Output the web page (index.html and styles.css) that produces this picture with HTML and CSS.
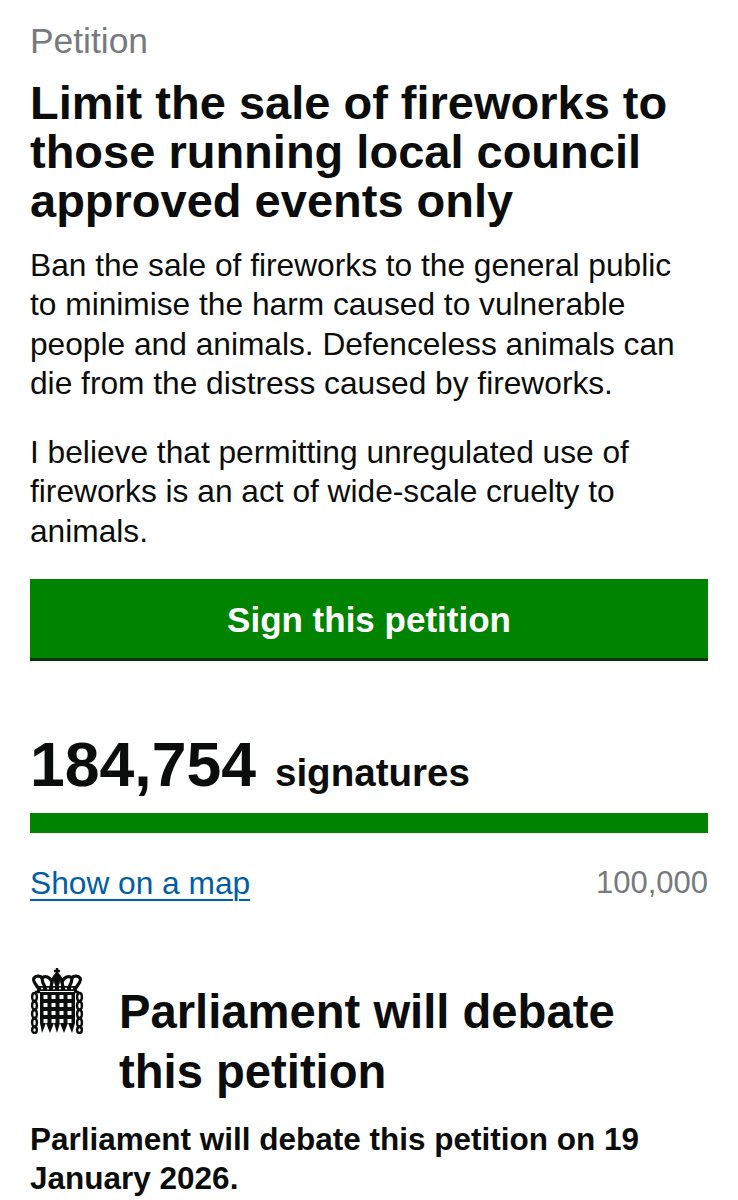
FILE: index.html
```html
<!DOCTYPE html>
<html>
<head>
    <title>Petition</title>
    <link rel="stylesheet" href="styles.css">
</head>
<body>
    <span class="label">Petition</span>
    <h1>Limit the sale of fireworks to those running local council approved events only</h1>
    <p class="lead">Ban the sale of fireworks to the general public to minimise the harm caused to vulnerable people and animals. Defenceless animals can die from the distress caused by fireworks.</p>
    <p class="details">I believe that permitting unregulated use of fireworks is an act of wide-scale cruelty to animals.</p>

    <a class="sign-btn" href="#">Sign this petition</a>

    <div class="signatures"><span class="count">184,754</span> <span class="count-label">signatures</span></div>
    <div class="progress"></div>
    <div class="progress-foot">
        <a class="map-link" href="#">Show on a map</a>
        <span class="threshold">100,000</span>
    </div>

    <div class="debate-head">
        <svg class="portcullis" viewBox="0 0 54 66" width="54" height="66">
            <!-- crown -->
            <path d="M27 0v7M24 3h6" stroke="#0b0c0c" stroke-width="2.4" fill="none"/>
            <g fill="none" stroke="#0b0c0c" stroke-width="3.2">
                <path d="M27 6C24 8 23 11 22 14 20 9 15 7 12 10 11 8 6 7 4 10 2 13 6 16 8 20"/>
                <path d="M27 6C30 8 31 11 32 14 34 9 39 7 42 10 43 8 48 7 50 10 52 13 48 16 46 20"/>
                <path d="M27 6C25 10 25 14 27 18 29 14 29 10 27 6z"/>
                <path d="M12 10C12 13 13 16 15 19M42 10C42 13 41 16 39 19M22 14 21 19M32 14 33 19"/>
            </g>
            <rect x="7" y="18" width="40" height="5" fill="#0b0c0c"/>
            <g fill="#fff">
                <circle cx="12" cy="20.5" r="1"/><circle cx="18" cy="20.5" r="1"/><circle cx="24" cy="20.5" r="1"/><circle cx="30" cy="20.5" r="1"/><circle cx="36" cy="20.5" r="1"/><circle cx="42" cy="20.5" r="1"/>
            </g>
            <!-- portcullis -->
            <path d="M10 24h35v31l-3 10-4-10-4 10-4-10-3 10-3-10-4 10-4-10-4 10-2-10z" fill="#0b0c0c"/>
            <g fill="#fff">
                <rect x="13.5" y="27" width="4" height="4"/><rect x="21.5" y="27" width="4" height="4"/><rect x="29.5" y="27" width="4" height="4"/><rect x="37.5" y="27" width="4" height="4"/>
                <rect x="13.5" y="35" width="4" height="4"/><rect x="21.5" y="35" width="4" height="4"/><rect x="29.5" y="35" width="4" height="4"/><rect x="37.5" y="35" width="4" height="4"/>
                <rect x="13.5" y="43" width="4" height="4"/><rect x="21.5" y="43" width="4" height="4"/><rect x="29.5" y="43" width="4" height="4"/><rect x="37.5" y="43" width="4" height="4"/>
                <rect x="13.5" y="51" width="4" height="4"/><rect x="21.5" y="51" width="4" height="4"/><rect x="29.5" y="51" width="4" height="4"/><rect x="37.5" y="51" width="4" height="4"/>
            </g>
            <!-- chains -->
            <g fill="none" stroke="#0b0c0c" stroke-width="2.4">
                <path d="M5 24h5M44 24h5"/>
                <ellipse cx="4.5" cy="29" rx="2.4" ry="4"/><ellipse cx="4.5" cy="37.5" rx="2.4" ry="4"/><ellipse cx="4.5" cy="46" rx="2.4" ry="4"/><ellipse cx="4.5" cy="54.5" rx="2.4" ry="4"/><ellipse cx="4.5" cy="62" rx="2.4" ry="3"/>
                <ellipse cx="49.5" cy="29" rx="2.4" ry="4"/><ellipse cx="49.5" cy="37.5" rx="2.4" ry="4"/><ellipse cx="49.5" cy="46" rx="2.4" ry="4"/><ellipse cx="49.5" cy="54.5" rx="2.4" ry="4"/><ellipse cx="49.5" cy="62" rx="2.4" ry="3"/>
            </g>
        </svg>
        <h2>Parliament will debate this petition</h2>
    </div>
    <p class="debate-date">Parliament will debate this petition on 19 January 2026.</p>
</body>
</html>
```

FILE: styles.css
```css
body { margin: 0; padding: 20px 30px 0; font-family: "Liberation Sans", Arial, sans-serif; color: #0b0c0c; background: #fff; overflow: hidden; height: 1180px; }
.label { display: block; font-size: 35.4px; line-height: 42px; color: #767a7e; }
h1 { margin: 16px 0 0; font-size: 47px; line-height: 49px; font-weight: bold; }
p { margin: 0; max-width: 655px; font-size: 31.7px; line-height: 39.3px; }
.lead { margin-top: 21px; }
.details { margin-top: 30px; }
.sign-btn { display: block; margin-top: 28px; height: 79px; line-height: 82px; background: #008300; border-bottom: 3px solid #063406; color: #fff; font-size: 35px; font-weight: bold; text-align: center; text-decoration: none; }
.signatures { margin-top: 64px; display: flex; align-items: baseline; gap: 19px; line-height: 78px; }
.count { font-size: 62.5px; font-weight: bold; }
.count-label { font-size: 38.6px; font-weight: bold; }
.progress { margin-top: 1px; height: 20px; background: #008300; }
.progress-foot { margin-top: 30px; display: flex; justify-content: space-between; font-size: 31.7px; line-height: 40px; }
.map-link { color: #005ea5; text-decoration: underline; text-decoration-thickness: 2px; text-underline-offset: 5px; }
.threshold { color: #767a7e; font-size: 31px; }
.debate-head { margin-top: 65px; display: flex; gap: 35px; align-items: flex-start; }
.portcullis { flex: none; }
h2 { margin: 14px 0 0; font-size: 47.2px; line-height: 60px; font-weight: bold; }
p.debate-date { margin-top: 18px; font-weight: bold; font-size: 31.5px; line-height: 39px; }
```
